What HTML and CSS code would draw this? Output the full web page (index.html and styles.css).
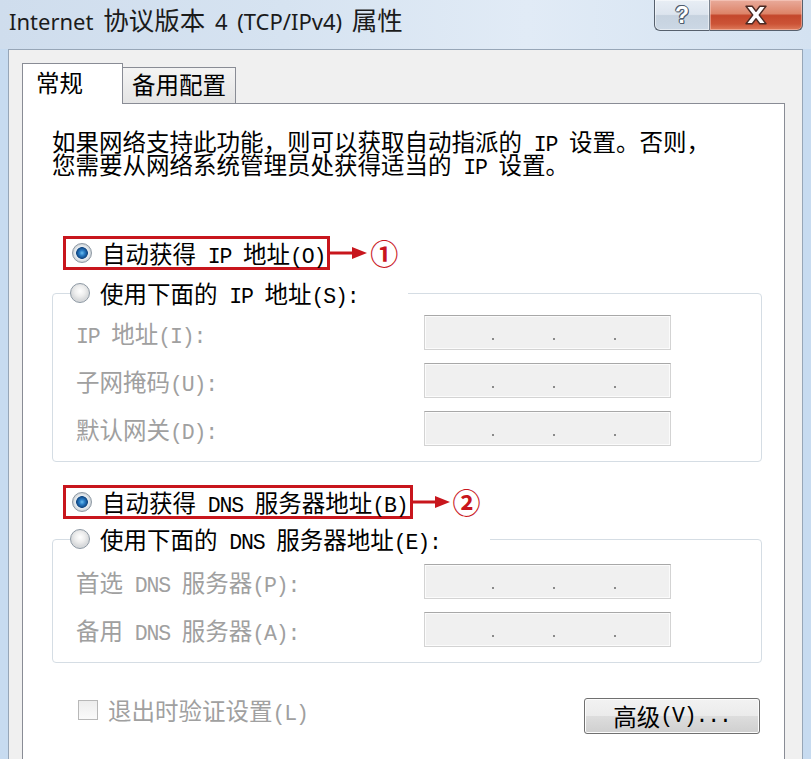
FILE: index.html
```html
<!DOCTYPE html>
<html lang="zh-CN">
<head>
<meta charset="utf-8">
<title>Internet 协议版本 4 (TCP/IPv4) 属性</title>
<link rel="stylesheet" href="styles.css">
</head>
<body>
<div class="window">
  <header class="titlebar">
    <h1 class="title">Internet <span class="zh">协议版本</span> 4 (TCP/IPv4) <span class="zh">属性</span></h1>
    <div class="caption-btns">
      <button class="cap help" type="button"><span class="q">?</span></button>
      <button class="cap close" type="button">
        <svg width="26" height="20" viewBox="0 0 20 16"><polygon points="2,1 7,1 10,5 13,1 18,1 12.6,8 18,15 13,15 10,11 7,15 2,15 7.4,8" fill="#fff" stroke="#4b2a24" stroke-width="1.1" stroke-linejoin="round"/></svg>
      </button>
    </div>
  </header>

  <div class="client">
    <div class="tabs">
      <div class="tab active">常规</div>
      <div class="tab inactive">备用配置</div>
    </div>

    <div class="panel">
      <p class="intro">如果网络支持此功能，则可以获取自动指派的<span class="en"> IP </span>设置。否则，<br>您需要从网络系统管理员处获得适当的<span class="en"> IP </span>设置。</p>

      <div class="pick first-pick">
        <div class="redbox">
          <span class="radio on"></span>
          <span class="lbl">自动获得<span class="en"> IP </span>地址<span class="en">(O)</span></span>
        </div>
        <svg class="arrow" width="38" height="16" viewBox="0 0 38 16"><line x1="0" y1="8" x2="24" y2="8" stroke="#c8161d" stroke-width="3"/><polygon points="22,2 37,8 22,14" fill="#c8161d"/></svg>
        <span class="num">①</span>
      </div>

      <fieldset class="group">
        <legend><span class="radio"></span><span class="lbl">使用下面的<span class="en"> IP </span>地址<span class="en">(S):</span></span></legend>
        <div class="row first">
          <span class="lbl"><span class="en">IP </span>地址<span class="en">(I):</span></span>
          <div class="ipbox"><i class="dot"></i><i class="dot"></i><i class="dot"></i></div>
        </div>
        <div class="row">
          <span class="lbl">子网掩码<span class="en">(U):</span></span>
          <div class="ipbox"><i class="dot"></i><i class="dot"></i><i class="dot"></i></div>
        </div>
        <div class="row">
          <span class="lbl">默认网关<span class="en">(D):</span></span>
          <div class="ipbox"><i class="dot"></i><i class="dot"></i><i class="dot"></i></div>
        </div>
      </fieldset>

      <div class="pick second-pick">
        <div class="redbox">
          <span class="radio on"></span>
          <span class="lbl">自动获得<span class="en"> DNS </span>服务器地址<span class="en">(B)</span></span>
        </div>
        <svg class="arrow" width="38" height="16" viewBox="0 0 38 16"><line x1="0" y1="8" x2="24" y2="8" stroke="#c8161d" stroke-width="3"/><polygon points="22,2 37,8 22,14" fill="#c8161d"/></svg>
        <span class="num">②</span>
      </div>

      <fieldset class="group dns">
        <legend><span class="radio"></span><span class="lbl">使用下面的<span class="en"> DNS </span>服务器地址<span class="en">(E):</span></span></legend>
        <div class="row first">
          <span class="lbl">首选<span class="en"> DNS </span>服务器<span class="en">(P):</span></span>
          <div class="ipbox"><i class="dot"></i><i class="dot"></i><i class="dot"></i></div>
        </div>
        <div class="row">
          <span class="lbl">备用<span class="en"> DNS </span>服务器<span class="en">(A):</span></span>
          <div class="ipbox"><i class="dot"></i><i class="dot"></i><i class="dot"></i></div>
        </div>
      </fieldset>

      <div class="footer">
        <label class="chk"><span class="box"></span><span class="lbl">退出时验证设置<span class="en">(L)</span></span></label>
        <button class="adv" type="button">高级<span class="en">(V)...</span></button>
      </div>
    </div>
  </div>
</div>
</body>
</html>
```
FILE: styles.css
```css
html, body {
  margin: 0;
  height: 759px;
  overflow: hidden;
}
body {
  background: #c7dbf0;
  font-family: "Noto Sans CJK SC", sans-serif;
  color: #000;
}
.window {
  height: 759px;
  display: flex;
  flex-direction: column;
}

/* title bar */
.titlebar {
  flex: none;
  height: 49px;
  display: flex;
  justify-content: space-between;
  align-items: flex-start;
  background: linear-gradient(to right, #cfdded 0%, #d6e3f1 35%, #e1ebf6 65%, #d4e2f1 100%);
}
.title {
  margin: 0;
  padding: 7px 0 0 9px;
  font: 400 22px/28px "Noto Sans", "Noto Sans CJK SC", sans-serif;
  word-spacing: 4px;
  color: #1b1b1b;
}
.title .zh { font-size: 25.5px; line-height: 0; }
.caption-btns {
  display: flex;
  margin-right: 8px;
}
.cap {
  height: 31px;
  margin: 0;
  padding: 0;
  border: 1px solid #56606d;
  border-top: none;
  display: flex;
  align-items: center;
  justify-content: center;
}
.help {
  width: 56px;
  border-radius: 0 0 0 6px;
  border-right: 1px solid #7b8591;
  background: linear-gradient(#e8eef5 0%, #dce4ee 48%, #c6d2df 52%, #ccd8e5 100%);
  box-shadow: inset 0 0 0 1px rgba(255,255,255,0.5);
}
.help .q {
  font: 700 23px/1 "Liberation Sans", sans-serif;
  color: #fff;
  text-shadow: 1px 0 #4f5d6e, -1px 0 #4f5d6e, 0 1px #4f5d6e, 0 -1px #4f5d6e, 1px 1px #4f5d6e, -1px -1px #4f5d6e;
}
.close {
  width: 93px;
  border-left: none;
  border-radius: 0 0 6px 0;
  background: linear-gradient(#e9ab9b 0%, #dd8469 45%, #c4472c 52%, #cc5437 80%, #de7c5c 100%);
  box-shadow: inset 0 0 0 1px rgba(255,220,210,0.45);
}

/* client area */
.client {
  flex: 1;
  margin: 0 8px;
  border: 1px solid #97a6b7;
  border-bottom: none;
  background: #f0f0f0;
  padding: 13px 17px 0 13px;
  display: flex;
  flex-direction: column;
}
.tabs {
  display: flex;
  align-items: flex-end;
  height: 41px;
  margin-bottom: -1px;
  position: relative;
  z-index: 1;
  font-size: 23.5px;
}
.tab {
  box-sizing: border-box;
  border: 1px solid #898c95;
  border-bottom: none;
}
.tab.active {
  width: 101px;
  height: 41px;
  background: #fff;
  padding: 4px 0 0 13px;
  line-height: 28px;
}
.tab.inactive {
  width: 113px;
  height: 36px;
  margin-bottom: 1px;
  border-left: none;
  background: linear-gradient(#f4f4f4, #e4e4e4);
  padding: 2px 0 0 9px;
  line-height: 28px;
}
.panel {
  flex: 1;
  background: #fff;
  border: 1px solid #898c95;
  border-bottom: none;
  padding: 0 22px 0 29px;
  display: flex;
  flex-direction: column;
  align-items: flex-start;
  font-size: 23.5px;
  line-height: 28px;
}
.en {
  font-family: "Liberation Mono", monospace;
  font-size: 21.5px;
  letter-spacing: -1.15px;
  line-height: 0;
  white-space: pre;
}
.intro {
  margin: 26px 0 0;
  line-height: 23px;
}

/* highlighted radio choices */
.pick {
  display: flex;
  align-items: center;
  margin-left: 11px;
}
.first-pick { margin-top: 60px; }
.second-pick { margin-top: 23px; }
.redbox {
  box-sizing: border-box;
  height: 34px;
  border: 3px solid #c8161d;
  display: flex;
  align-items: center;
  gap: 10px;
  padding: 0 2px 0 6px;
}
.arrow { display: block; }
.num {
  margin-left: 2px;
  color: #c8161d;
  font-size: 28px;
  font-weight: 700;
  line-height: 28px;
}

.radio {
  flex: none;
  width: 20px;
  height: 20px;
  box-sizing: border-box;
  border-radius: 50%;
  border: 1px solid #8e99a4;
  background: radial-gradient(circle at 50% 40%, #ffffff 0, #eeeeee 5px, #d7d9db 9px);
}
.radio.on {
  background: radial-gradient(circle at 50% 50%, #6cc0ef 0, #2b7fc8 2.5px, #0f4682 5.5px, #e8edf1 6.2px, #dfe4e8 7.5px, #c9cfd4 9px);
}

/* group boxes */
.group {
  box-sizing: border-box;
  width: 100%;
  min-width: 0;
  margin: 9px 0 0;
  border: 1px solid #d5dde4;
  border-radius: 4px;
  padding: 0 90px 15px 23px;
}
.group.dns { margin-top: 6px; }
.group legend {
  display: flex;
  align-items: center;
  gap: 10px;
  margin-left: -6px;
  padding: 0 49px 0 0;
  height: 28px;
}
.row {
  display: grid;
  grid-template-columns: 1fr 247px;
  align-items: center;
  margin-top: 13px;
  color: #a0a0a0;
}
.row.first { margin-top: 8px; }
.group.dns .row.first { margin-top: 11px; }
.ipbox {
  box-sizing: border-box;
  height: 35px;
  border: 1px solid #d3d3d3;
  border-top-color: #a8a8a8;
  background: #f0f0f0;
  box-shadow: inset 0 0 0 1px #fbfbfb;
  display: flex;
  align-items: flex-end;
  gap: 59px;
  padding: 0 0 9px 67px;
}
.dot {
  width: 2px;
  height: 2px;
  background: #8a8a8a;
}

/* footer */
.footer {
  width: 100%;
  display: flex;
  justify-content: space-between;
  align-items: flex-start;
  margin-top: 35px;
}
.chk {
  display: flex;
  align-items: center;
  gap: 10px;
  margin: -2px 0 0 26px;
  color: #a0a0a0;
}
.box {
  width: 20px;
  height: 20px;
  box-sizing: border-box;
  border: 1px solid #b8b8b8;
  background: linear-gradient(#ededed, #fafafa);
}
.adv {
  box-sizing: border-box;
  width: 176px;
  height: 36px;
  margin: 0 2px 0 0;
  padding: 0;
  border: 1px solid #707070;
  border-radius: 3px;
  background: linear-gradient(#f2f2f2 0%, #ebebeb 50%, #dddddd 51%, #cfcfcf 100%);
  box-shadow: inset 0 0 0 1px #fcfcfc;
  font-family: "Noto Sans CJK SC", sans-serif;
  font-size: 23.5px;
  line-height: 28px;
  color: #000;
  display: flex;
  align-items: center;
  justify-content: center;
}
```
